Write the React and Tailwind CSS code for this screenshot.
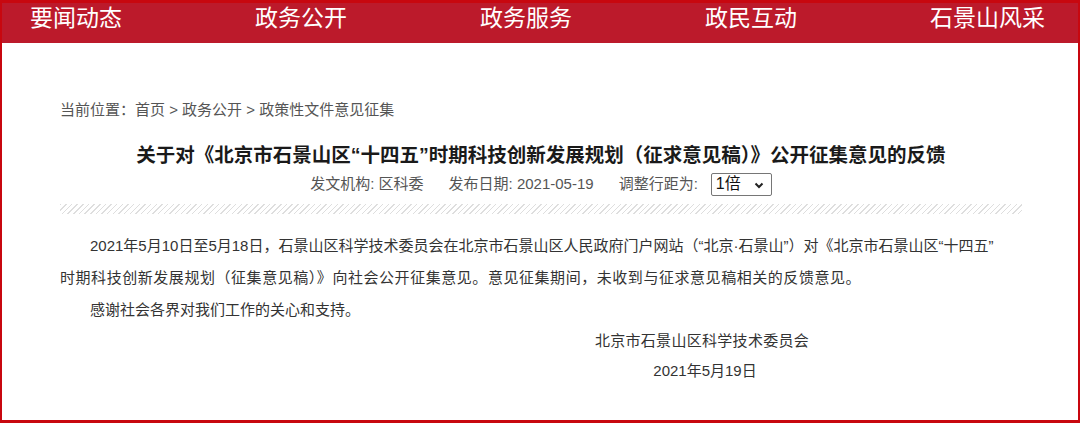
import React from "react";

const navItems = ["要闻动态", "政务公开", "政务服务", "政民互动", "石景山风采"];

export default function App() {
  return (
    <div className="w-[1080px] h-[423px] overflow-hidden border-t-[3px] border-b-[3px] border-x-2 border-[#c8070f] bg-white font-['Liberation_Sans','Noto_Sans_CJK_SC',sans-serif]">
      <nav className="h-[40px] bg-[#bc1a2b] flex pl-[28px]">
        {navItems.map((t) => (
          <div key={t} className="shrink-0 w-[225px] text-[23px] leading-[27px] text-white font-['Noto_Sans_CJK_SC',sans-serif]">
            {t}
          </div>
        ))}
      </nav>
      <div className="pl-[58px] pr-[56px]">
        <div className="mt-[55px] text-[15px] leading-[24px] text-[#555]">
          当前位置：首页 &gt; 政务公开 &gt; 政策性文件意见征集
        </div>
        <h1 className="mt-[19px] text-center text-[19.5px] leading-[28px] font-bold text-[#1a1a1a] whitespace-nowrap">
          关于对《北京市石景山区“十四五”时期科技创新发展规划（征求意见稿）》公开征集意见的反馈
        </h1>
        <div className="mt-[3px] h-[24px] flex items-center justify-center text-[15px] text-[#555] gap-[25px]">
          <span>发文机构: 区科委</span>
          <span>发布日期: 2021-05-19</span>
          <span className="flex items-center gap-[13px]">
            <span>调整行距为:</span>
            <span className="relative w-[61px] h-[23px] border border-[#767676] rounded-[2px] bg-white flex items-center pl-[4px] text-[16px] text-[#111]">
              1倍
              <svg className="absolute right-[7px] top-[8px]" width="10" height="7" viewBox="0 0 10 7">
                <polyline points="1.5,1.5 5,5 8.5,1.5" fill="none" stroke="#222" strokeWidth="2" />
              </svg>
            </span>
          </span>
        </div>
        <div className="mt-[8px] h-[10px] bg-[image:repeating-linear-gradient(135deg,#dedede_0px,#dedede_1px,#ffffff_1px,#ffffff_4px)]" />
        <div className="mt-[16px] text-[15px] leading-[32px] text-[#333] whitespace-nowrap">
          <div className="pl-[30px]">
            2021年5月10日至5月18日，石景山区科学技术委员会在北京市石景山区人民政府门户网站（“北京·石景山”）对《北京市石景山区“十四五”
          </div>
          <div className="tracking-[0.55px]">
            时期科技创新发展规划（征集意见稿）》向社会公开征集意见。意见征集期间，未收到与征求意见稿相关的反馈意见。
          </div>
          <div className="pl-[30px]">感谢社会各界对我们工作的关心和支持。</div>
        </div>
        <div className="ml-[529px] w-[226px] text-center text-[15px] leading-[30px] text-[#333]">
          <div className="tracking-[0.3px]">北京市石景山区科学技术委员会</div>
          <div className="pl-[6px]">2021年5月19日</div>
        </div>
      </div>
    </div>
  );
}
